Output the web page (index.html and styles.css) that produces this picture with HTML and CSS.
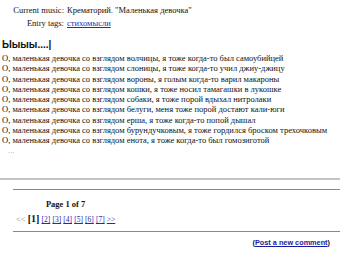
FILE: index.html
```html
<!DOCTYPE html>
<html lang="ru">
<head>
    <meta charset="UTF-8">
    <title>Ыыыы....</title>
    <link rel="stylesheet" href="styles.css">
</head>
<body>
    <div class="meta">
        <span class="label">Current music:</span>
        <span>Крематорий. "Маленькая девочка"</span>
        <span class="label">Entry tags:</span>
        <span><a href="#">стихомысли</a></span>
    </div>

    <h2 class="subject">Ыыыы....|</h2>

    <div class="poem">
        О, маленькая девочка со взглядом волчицы, я тоже когда-то был самоубийцей<br>
        О, маленькая девочка со взглядом слоницы, я тоже когда-то учил джиу-джицу<br>
        О, маленькая девочка со взглядом вороны, я голым когда-то варил макароны<br>
        О, маленькая девочка со взглядом кошки, я тоже носил тамагашки в лукошке<br>
        О, маленькая девочка со взглядом собаки, я тоже порой вдыхал нитролаки<br>
        О, маленькая девочка со взглядом белуги, меня тоже порой достают кали-юги<br>
        О, маленькая девочка со взглядом ерша, я тоже когда-то попой дышал<br>
        О, маленькая девочка со взглядом бурундучковым, я тоже гордился броском трехочковым<br>
        О, маленькая девочка со взглядом енота, я тоже когда-то был гомозиготой
    </div>
    <div class="more">...</div>

    <hr class="sep">

    <div class="pager">
        <hr class="line">
        <div class="pages">
            <div class="page-of">Page 1 of 7</div>
            <div class="page-links">
                <span class="dim">&lt;&lt;</span>
                <b class="cur">[1]</b>
                <a href="#">[2]</a>
                <a href="#">[3]</a>
                <a href="#">[4]</a>
                <a href="#">[5]</a>
                <a href="#">[6]</a>
                <a href="#">[7]</a>
                <a href="#">&gt;&gt;</a>
            </div>
        </div>
        <hr class="line">
    </div>

    <div class="post">(<a href="#">Post a new comment</a>)</div>
</body>
</html>
```

FILE: styles.css
```css
body {
    margin: 0;
    font-family: "Liberation Serif", serif;
    font-size: 8.5px;
    color: #111;
    background: #fff;
}
a {
    color: #2a2ab0;
}
.meta {
    display: grid;
    grid-template-columns: 64px auto;
    column-gap: 3px;
    row-gap: 4px;
    padding-top: 6px;
    line-height: 9px;
}
.meta .label {
    text-align: right;
}
.subject {
    font-family: "Liberation Sans", Arial, sans-serif;
    font-size: 10px;
    font-weight: bold;
    margin: 11px 0 0 2px;
    line-height: 12px;
}
.poem {
    margin: 2px 0 0 2px;
    line-height: 10.3px;
}
.more {
    color: #aaa;
    margin-left: 8px;
    line-height: 8px;
}
.sep {
    margin: 24px 0 0;
    border: 0;
    border-top: 2px solid #c4c4c4;
}
.pager {
    margin: 9px 0 0 13px;
}
.line {
    margin: 0;
    border: 0;
    border-top: 1px solid #888;
}
.pages {
    display: inline-block;
    text-align: center;
    margin: 9px 0 5px 3px;
}
.page-of {
    font-weight: bold;
    line-height: 11px;
}
.page-links {
    margin-top: 2px;
    line-height: 13px;
}
.page-links a {
    font-size: 7.5px;
}
.dim {
    color: #888;
}
.cur {
    font-size: 10px;
}
.post {
    text-align: right;
    margin: 6px 10px 0 0;
    font-family: "Liberation Sans", Arial, sans-serif;
    font-size: 7.3px;
    font-weight: bold;
}
.post a {
    color: #1a1aa0;
}
```
